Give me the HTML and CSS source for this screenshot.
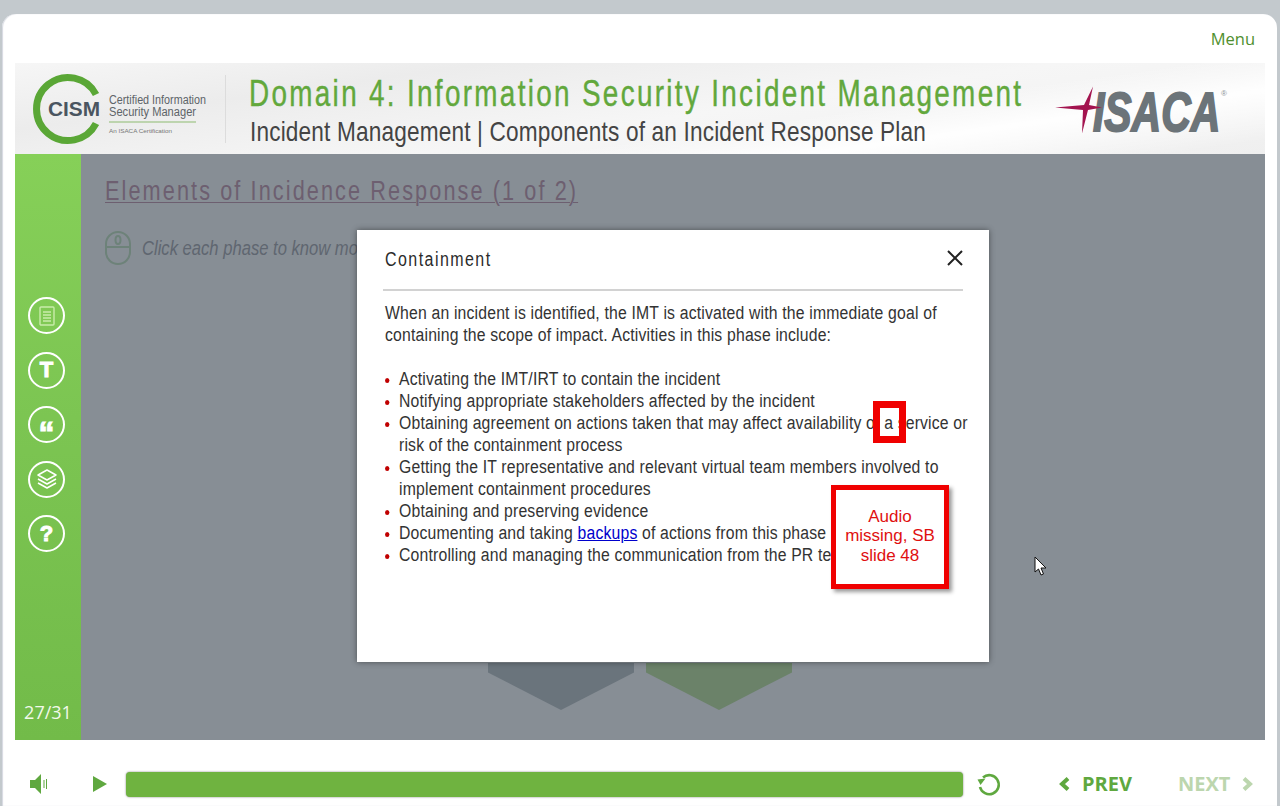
FILE: index.html
```html
<!DOCTYPE html>
<html lang="en">
<head>
    <meta charset="UTF-8">
    <title>Domain 4: Information Security Incident Management</title>
    <link rel="stylesheet" href="styles.css">
</head>
<body>
    <div class="player">
        <div class="top-bar"><a class="menu-link" href="#">Menu</a></div>

        <header class="banner">
            <svg class="cism-logo" width="190" height="76" viewBox="0 0 190 76">
                <path d="M65 23.5 A31.5 31.5 0 1 0 65 52.5" fill="none" stroke="#5aa736" stroke-width="7"/>
                <text x="17" y="45" class="cism-word" textLength="52" lengthAdjust="spacingAndGlyphs">CISM</text>
                <text x="78" y="33" class="cism-line" textLength="97" lengthAdjust="spacingAndGlyphs">Certified Information</text>
                <text x="78" y="45" class="cism-line" textLength="87" lengthAdjust="spacingAndGlyphs">Security Manager</text>
                <line x1="78" y1="51" x2="165" y2="51" stroke="#8dbb70" stroke-width="1"/>
                <text x="78" y="62" class="cism-small" textLength="63" lengthAdjust="spacingAndGlyphs">An ISACA Certification</text>
            </svg>
            <div class="banner-divider"></div>
            <div class="banner-titles">
                <h1>Domain 4: Information Security Incident Management</h1>
                <h2>Incident Management | Components of an Incident Response Plan</h2>
            </div>
            <div class="isaca-logo">
                <span class="isaca-word">ISACA</span>
                <span class="isaca-reg">®</span>
                <svg class="isaca-star" width="50" height="50" viewBox="0 0 50 50">
                    <path d="M2 23.5 L31 21 L40 2.5 L36 21 L49 23.5 L35 26 L29 49.5 L30 26 Z" fill="#a3144f"/>
                </svg>
            </div>
        </header>

        <div class="stage">
            <aside class="sidebar">
                <div class="side-icons">
                    <div class="side-icon">
                        <svg width="22" height="24" viewBox="0 0 22 24" fill="none" stroke="#c9ecaa" stroke-width="1.4">
                            <rect x="4" y="3" width="14" height="18" rx="1"/>
                            <path d="M7 8h8M7 11h8M7 14h8M7 17h8"/>
                        </svg>
                    </div>
                    <div class="side-icon"><span class="glyph">T</span></div>
                    <div class="side-icon"><span class="glyph quote">“</span></div>
                    <div class="side-icon">
                        <svg width="24" height="24" viewBox="0 0 24 24" fill="none" stroke="#fff" stroke-width="1.5" stroke-linejoin="round">
                            <path d="M12 3 L21 8 L12 13 L3 8 Z"/>
                            <path d="M3 12 L12 17 L21 12"/>
                            <path d="M3 16 L12 21 L21 16"/>
                        </svg>
                    </div>
                    <div class="side-icon"><span class="glyph">?</span></div>
                </div>
                <div class="page-count">27/31</div>
            </aside>

            <main class="slide">
                <h3 class="slide-title">Elements of Incidence Response (1 of 2)</h3>
                <div class="slide-hint">
                    <svg width="26" height="36" viewBox="0 0 26 36" fill="none" stroke="#6d8279" stroke-width="2">
                        <rect x="1" y="2" width="24" height="32" rx="12"/>
                        <path d="M1 17h24"/>
                        <ellipse cx="13" cy="10" rx="2.5" ry="4"/>
                    </svg>
                    <span class="hint-text">Click each phase to know more.</span>
                </div>
            </main>

            <div class="phase phase-grey"></div>
            <div class="phase phase-green"></div>

            <section class="modal">
                <div class="modal-head">
                    <span class="modal-title">Containment</span>
                    <svg class="modal-close" width="18" height="18" viewBox="0 0 18 18" stroke="#222" stroke-width="2">
                        <path d="M2 2 L16 16 M16 2 L2 16"/>
                    </svg>
                </div>
                <div class="modal-body">
                    <p>When an incident is identified, the IMT is activated with the immediate goal of containing the scope of impact. Activities in this phase include:</p>
                    <ul>
                        <li>Activating the IMT/IRT to contain the incident</li>
                        <li>Notifying appropriate stakeholders affected by the incident</li>
                        <li>Obtaining agreement on actions taken that may affect availability of a service or risk of the containment process</li>
                        <li>Getting the IT representative and relevant virtual team members involved to implement containment procedures</li>
                        <li>Obtaining and preserving evidence</li>
                        <li>Documenting and taking <a href="#">backups</a> of actions from this phase</li>
                        <li>Controlling and managing the communication from the PR team</li>
                    </ul>
                </div>
                <div class="note-mark"></div>
                <div class="note-box">Audio missing, SB slide 48</div>
            </section>

            <svg class="cursor" width="14" height="21" viewBox="0 0 14 21">
                <path d="M1 1 L1 16 L4.5 13 L7 19 L9.5 18 L7 12 L12 12 Z" fill="#fff" stroke="#111" stroke-width="1"/>
            </svg>
        </div>

        <footer class="controls">
            <svg class="ctl-audio" width="22" height="22" viewBox="0 0 22 22" fill="#5fa83f">
                <path d="M1 7h5l6-6v20l-6-6H1z"/>
                <path d="M14.5 7h1v8h-1zM17 6h1v10h-1z"/>
            </svg>
            <svg class="ctl-play" width="16" height="18" viewBox="0 0 16 18" fill="#5fa83f">
                <path d="M1 1 L15 9 L1 17 Z"/>
            </svg>
            <div class="progress"></div>
            <svg class="ctl-replay" width="26" height="26" viewBox="0 0 26 26" fill="none" stroke="#5fa83f" stroke-width="2.6">
                <path d="M7 6.5 A9.5 9.5 0 1 1 4 16"/>
                <path d="M1.5 8.5 L9.5 7.5 L4.5 14 Z" fill="#5fa83f" stroke="none"/>
            </svg>
            <a class="nav-btn prev" href="#">
                <svg width="11" height="14" viewBox="0 0 11 14" fill="none" stroke="currentColor" stroke-width="4"><path d="M9 1.5 L3 7 L9 12.5"/></svg>
                PREV
            </a>
            <a class="nav-btn next" href="#">
                NEXT
                <svg width="11" height="14" viewBox="0 0 11 14" fill="none" stroke="currentColor" stroke-width="4"><path d="M2 1.5 L8 7 L2 12.5"/></svg>
            </a>
        </footer>
    </div>
</body>
</html>
```

FILE: styles.css
```css
html, body {
    margin: 0;
    padding: 0;
}
body {
    background-color: #c3c9cd;
    height: 806px;
    overflow: hidden;
    font-family: "Liberation Sans", Arial, sans-serif;
}
.player {
    margin: 14px 3px 0 2px;
    height: 792px;
    padding: 0 12px 0 13px;
    background-color: white;
    border-radius: 14px 14px 0 0;
    box-shadow: inset 1px 0 1px #d5d8e0;
    box-sizing: border-box;
}

/* top */
.top-bar {
    height: 49px;
    display: flex;
    justify-content: flex-end;
    align-items: center;
}
.menu-link {
    font-family: "Open Sans", sans-serif;
    font-size: 16.5px;
    color: #4f8f2e;
    text-decoration: none;
    margin-right: 10px;
}
.banner {
    height: 91px;
    display: flex;
    align-items: center;
    background:
        linear-gradient(172deg, transparent 62%, rgba(255,255,255,0.95) 76%, transparent 95%),
        linear-gradient(172deg, #f6f6f6 0%, #ececec 25%, #f6f6f6 55%, #efefef 100%);
}
.cism-logo {
    margin-left: 16px;
    flex: none;
}
.cism-word {
    font-weight: bold;
    font-size: 20px;
    fill: #4a5560;
}
.cism-line {
    font-size: 12px;
    fill: #5d6468;
}
.cism-small {
    font-size: 5px;
    fill: #777;
}
.banner-divider {
    width: 1px;
    height: 68px;
    margin-left: 4px;
    background-color: #dcdcdc;
}
.banner-titles {
    margin-left: 24px;
    padding-top: 4px;
    flex: 1;
    min-width: 0;
}
.banner-titles h1 {
    margin: 0 0 0 -1px;
    font-weight: normal;
    font-size: 36px;
    line-height: 42px;
    letter-spacing: 3px;
    color: #62a83c;
    -webkit-text-stroke: 0.4px #62a83c;
    white-space: nowrap;
    transform: scaleX(0.774);
    transform-origin: left;
}
.banner-titles h2 {
    margin: 0;
    font-weight: normal;
    font-size: 28px;
    line-height: 34px;
    letter-spacing: 0.2px;
    color: #444;
    white-space: nowrap;
    transform: scaleX(0.808);
    transform-origin: left;
}
.isaca-logo {
    position: relative;
    width: 212px;
    height: 50px;
    flex: none;
}
.isaca-star {
    position: absolute;
    left: 0;
    top: 0;
}
.isaca-word {
    position: absolute;
    left: 40px;
    top: 0;
    font-weight: bold;
    font-style: italic;
    font-size: 56px;
    line-height: 56px;
    color: #6c7479;
    -webkit-text-stroke: 2px #6c7479;
    transform: scaleX(0.73);
    transform-origin: left;
}
.isaca-reg {
    position: absolute;
    left: 168px;
    top: 5px;
    font-size: 8px;
    color: #8b9297;
}

/* stage */
.stage {
    position: relative;
    height: 586px;
    display: flex;
}
.sidebar {
    width: 66px;
    flex: none;
    display: flex;
    flex-direction: column;
    align-items: center;
    background: linear-gradient(180deg, #86d058 0%, #7cc552 45%, #72bb49 100%);
}
.side-icons {
    margin-top: 143px;
    margin-left: -3px;
    display: flex;
    flex-direction: column;
    gap: 17.5px;
}
.side-icon {
    flex: none;
    width: 33px;
    height: 33px;
    border: 2.5px solid white;
    border-radius: 50%;
    display: flex;
    align-items: center;
    justify-content: center;
}
.glyph {
    font-weight: bold;
    font-size: 22px;
    color: white;
    line-height: 1;
    -webkit-text-stroke: 1px white;
}
.quote {
    font-size: 32px;
    height: 16px;
    line-height: 32px;
}
.page-count {
    margin-top: auto;
    margin-bottom: 16px;
    font-family: "Open Sans", sans-serif;
    font-size: 18px;
    line-height: 24px;
    color: #f2f9ea;
}
.slide {
    flex: 1;
    min-width: 0;
    background-color: #878e95;
    padding: 21px 24px;
}
.slide-title {
    margin: 0;
    font-weight: normal;
    font-size: 27px;
    line-height: 32px;
    letter-spacing: 2.6px;
    color: #6d5f70;
    text-decoration: underline;
    text-underline-offset: 2px;
    text-decoration-thickness: 1px;
    transform: scaleX(0.803);
    transform-origin: left;
    white-space: nowrap;
}
.slide-hint {
    margin-top: 23px;
    display: flex;
    align-items: center;
    gap: 11px;
    color: #5f6670;
}
.hint-text {
    font-size: 20px;
    font-style: italic;
    white-space: nowrap;
    transform: scaleX(0.83);
    transform-origin: left;
}
.phase {
    position: absolute;
    top: 509px;
    width: 146px;
    height: 47px;
    clip-path: polygon(0 0, 100% 0, 100% 20%, 50% 100%, 0 20%);
}
.phase-grey {
    left: 473px;
    background-color: #6a747c;
}
.phase-green {
    left: 631px;
    background-color: #6b8269;
}

/* modal */
.modal {
    position: absolute;
    left: 342px;
    top: 76px;
    width: 632px;
    height: 432px;
    background-color: white;
    box-shadow: 0 0 6px rgba(0,0,0,0.45);
}
.modal-head {
    margin: 0 26px;
    height: 59px;
    border-bottom: 2px solid #d2d2d2;
    display: flex;
    align-items: center;
    justify-content: space-between;
    padding-left: 2px;
}
.modal-title {
    font-size: 20px;
    letter-spacing: 1.8px;
    color: #2b2b2b;
    transform: scaleX(0.8);
    transform-origin: left;
}
.modal-close {
    margin-top: -4px;
    margin-right: -1px;
}
.modal-body {
    width: 684px;
    margin: 11px 0 0 28px;
    font-size: 18px;
    line-height: 22px;
    letter-spacing: 0.2px;
    color: #333;
    transform: scaleX(0.876);
    transform-origin: left;
}
.modal-body p {
    margin: 0 0 22px;
}
.modal-body ul {
    margin: 0;
    padding: 0 0 0 16px;
}
.modal-body li::marker {
    color: #c00000;
    font-size: 16px;
}
.modal-body a {
    color: #0000cc;
}
.note-mark {
    position: absolute;
    left: 516px;
    top: 171px;
    width: 33px;
    height: 42px;
    border: 7px solid #f00000;
    box-sizing: border-box;
}
.note-box {
    position: absolute;
    left: 474px;
    top: 255px;
    width: 118px;
    height: 104px;
    border: 5px solid #f00000;
    background-color: white;
    box-shadow: 3px 3px 4px rgba(0,0,0,0.4);
    box-sizing: border-box;
    display: flex;
    align-items: center;
    justify-content: center;
    text-align: center;
    font-size: 17px;
    line-height: 19.5px;
    color: #e01010;
    padding: 0 6px 2px;
}
.cursor {
    position: absolute;
    left: 1019px;
    top: 402px;
}

/* bottom bar */
.controls {
    height: 88px;
    display: flex;
    align-items: center;
}
.ctl-audio {
    margin-left: 14px;
    flex: none;
}
.ctl-play {
    margin-left: 41px;
    flex: none;
}
.progress {
    width: 837px;
    height: 25px;
    margin-left: 18px;
    background-color: #6fb340;
    border-radius: 4px;
    box-shadow: 0 0 2px #777;
    flex: none;
}
.ctl-replay {
    margin-left: 13px;
    flex: none;
}
.nav-btn {
    font-family: "Open Sans", sans-serif;
    font-weight: bold;
    font-size: 20px;
    text-decoration: none;
    color: #5fa83f;
    display: flex;
    align-items: center;
    gap: 12px;
    padding-bottom: 2px;
}
.nav-btn svg {
    margin-top: 2px;
}
.prev {
    margin-left: 57px;
}
.next {
    margin-left: 46px;
    color: #bcd6ae;
}
```
